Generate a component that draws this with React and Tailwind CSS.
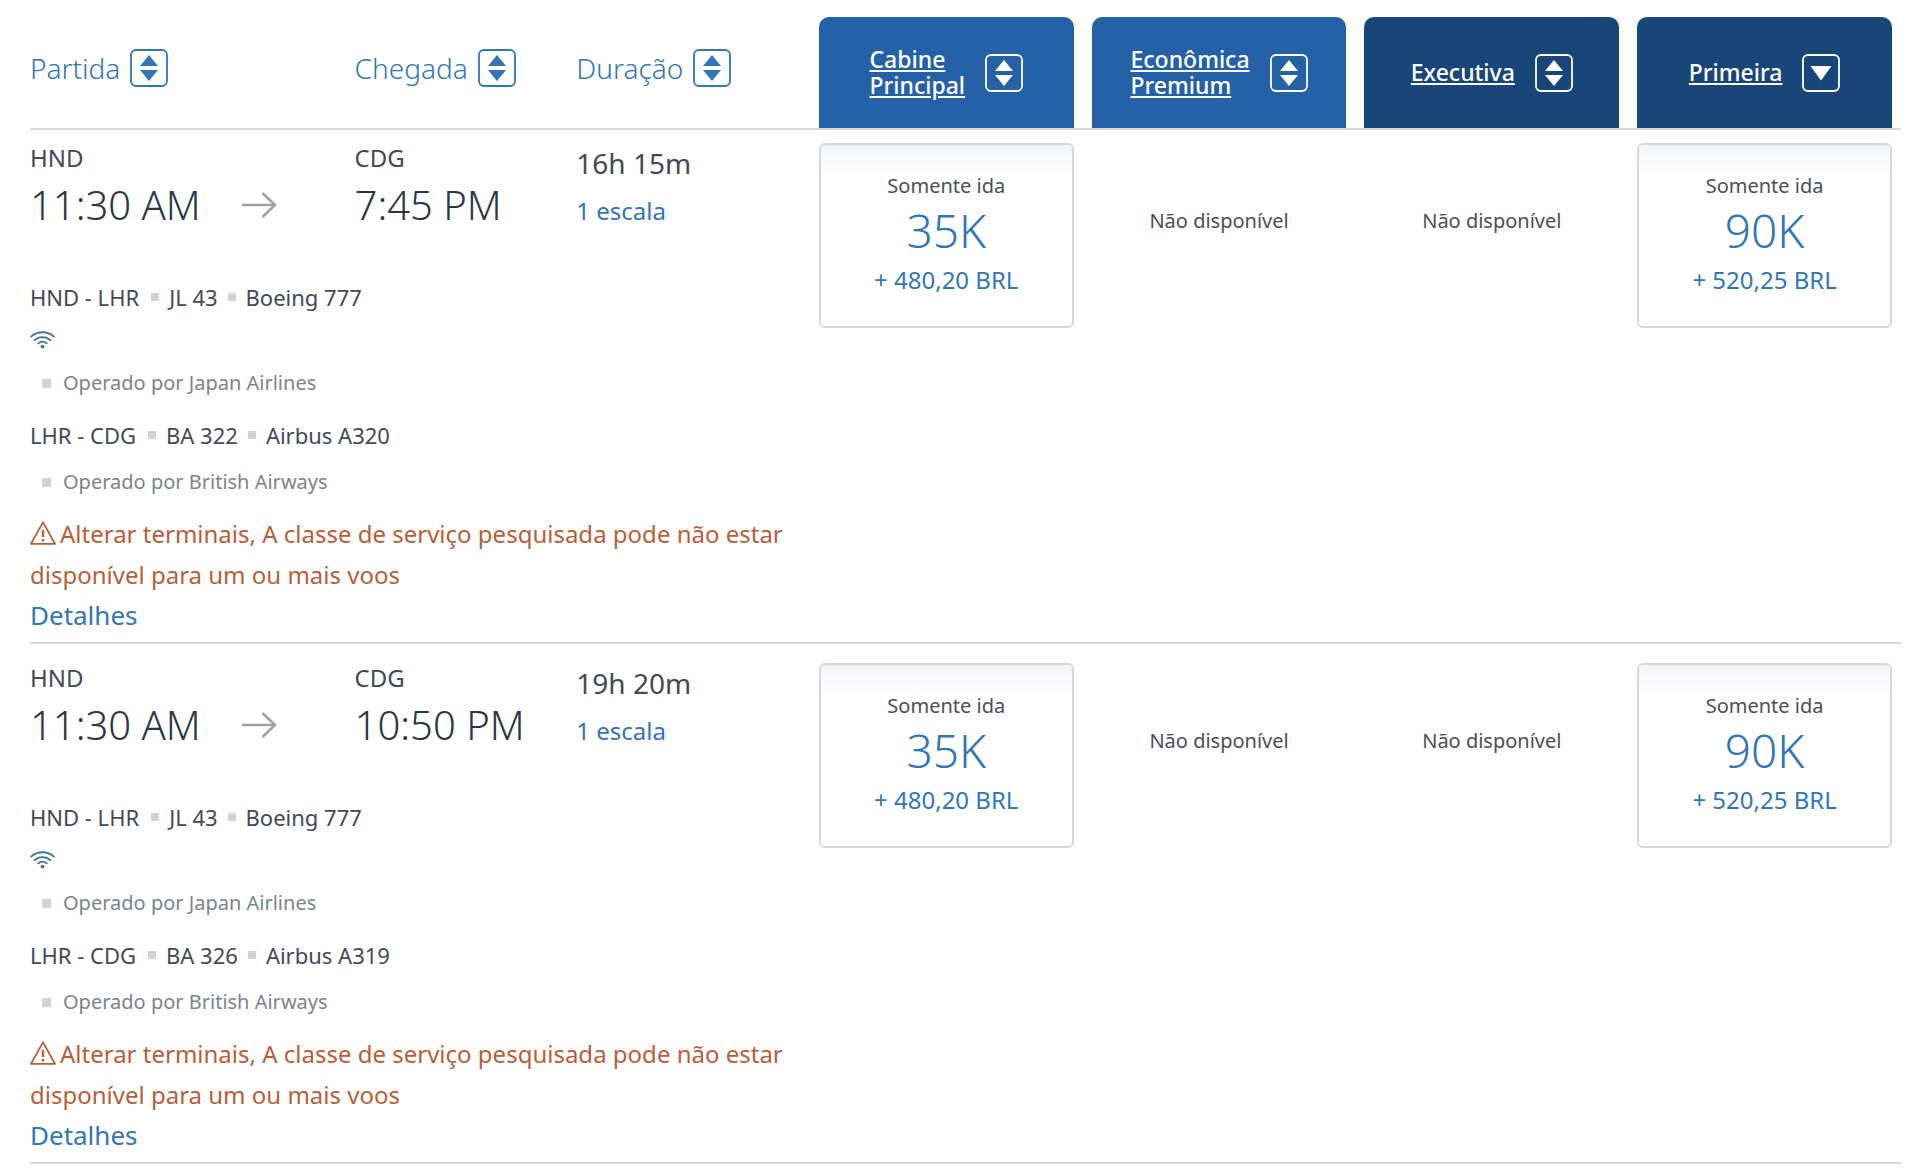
import { Fragment, useState } from "react";

const cabins = [
  { id: "main", lines: ["Cabine", "Principal"], color: "bg-[#2461a6]" },
  { id: "premium", lines: ["Econômica", "Premium"], color: "bg-[#2461a6]" },
  { id: "business", lines: ["Executiva"], color: "bg-[#194679]" },
  { id: "first", lines: ["Primeira"], color: "bg-[#194679]" },
];

const fares = {
  main: { miles: "35K", tax: "+ 480,20 BRL" },
  first: { miles: "90K", tax: "+ 520,25 BRL" },
};

const warning =
  "Alterar terminais, A classe de serviço pesquisada pode não estar disponível para um ou mais voos";

const flights = [
  {
    id: 1,
    departure: "11:30 AM",
    arrival: "7:45 PM",
    duration: "16h 15m",
    segments: [
      {
        route: "HND - LHR",
        number: "JL 43",
        aircraft: "Boeing 777",
        wifi: true,
        operator: "Operado por Japan Airlines",
      },
      {
        route: "LHR - CDG",
        number: "BA 322",
        aircraft: "Airbus A320",
        operator: "Operado por British Airways",
      },
    ],
  },
  {
    id: 2,
    departure: "11:30 AM",
    arrival: "10:50 PM",
    duration: "19h 20m",
    segments: [
      {
        route: "HND - LHR",
        number: "JL 43",
        aircraft: "Boeing 777",
        wifi: true,
        operator: "Operado por Japan Airlines",
      },
      {
        route: "LHR - CDG",
        number: "BA 326",
        aircraft: "Airbus A319",
        operator: "Operado por British Airways",
      },
    ],
  },
];

const SortIcon = ({ active }) => (
  <svg className="size-[38px] shrink-0" viewBox="0 0 38 38" aria-hidden="true">
    <rect
      x="1"
      y="1"
      width="36"
      height="36"
      rx="5"
      fill="none"
      stroke="currentColor"
      strokeWidth="1.8"
    />
    {active ? (
      <path d="M8.5 12h21L19 26.5z" fill="currentColor" />
    ) : (
      <path d="M19 6l9 11H10zM10 21h18l-9 11z" fill="currentColor" />
    )}
  </svg>
);

const ArrowIcon = () => (
  <svg
    className="h-[26px] w-[35px] shrink-0 text-[#a0a2a5]"
    viewBox="0 0 35 26"
    fill="none"
    stroke="currentColor"
    strokeWidth="2.6"
    aria-hidden="true"
  >
    <path d="M0 13h33M20.5 1L33 13 20.5 25" />
  </svg>
);

const WifiIcon = () => (
  <svg
    className="h-[18px] w-[25px] text-[#3f7596]"
    viewBox="0 0 25 18"
    fill="none"
    stroke="currentColor"
    strokeWidth="1.8"
    strokeLinecap="round"
    aria-hidden="true"
  >
    <path d="M1.2 5.6c6.2-5.8 16.4-5.8 22.6 0M4.6 9.2c4.4-4.2 11.4-4.2 15.8 0M8.2 12.4c2.6-2.2 6-2.2 8.6 0" />
    <circle cx="12.5" cy="15.6" r="1.9" fill="currentColor" stroke="none" />
  </svg>
);

const WarningIcon = () => (
  <svg
    className="mr-1 mb-2 inline-block h-6 w-[26px]"
    viewBox="0 0 26 24"
    fill="none"
    stroke="currentColor"
    strokeWidth="1.8"
    strokeLinejoin="round"
    aria-hidden="true"
  >
    <path d="M13 1.4L25 22.8H1z" />
    <path d="M13 9v7" strokeWidth="2.4" />
    <path d="M13 18v2.4" strokeWidth="2.4" />
  </svg>
);

const Segment = ({ segment }) => (
  <div>
    <div className="flex items-center text-[22px] leading-8">
      <span>{segment.route}</span>
      <span className="mr-2.5 ml-3 size-2 bg-[#d0d4da]" />
      <span>{segment.number}</span>
      <span className="mx-2.5 size-2 bg-[#d0d4da]" />
      <span>{segment.aircraft}</span>
    </div>
    {segment.wifi && (
      <div className="my-[18px]">
        <WifiIcon />
      </div>
    )}
    <div
      className={`flex items-center pl-3 text-xl leading-8 text-[#7a858e] ${
        segment.wifi ? "" : "mt-[15px]"
      }`}
    >
      <span className="mr-3 size-[9px] bg-[#d0d4da]" />
      {segment.operator}
    </div>
  </div>
);

const Fare = ({ fare }) => {
  if (!fare) {
    return (
      <p className="pt-[66px] text-center text-xl leading-6 text-[#4a4f58]">
        Não disponível
      </p>
    );
  }
  return (
    <button
      type="button"
      className="flex w-full flex-col items-center rounded-md border-2 border-[#d5d8dc] bg-linear-to-b from-[#f2f4f8] to-white to-[32px] pt-[29px] pb-[30px] text-[#3276b5]"
    >
      <span className="text-xl leading-6 text-[#4a4f58]">Somente ida</span>
      <span className="mt-2 text-[46px] leading-[48px] font-light">
        {fare.miles}
      </span>
      <span className="mt-2.5 text-2xl leading-8">{fare.tax}</span>
    </button>
  );
};

const SortHeader = ({ label, onClick, active }) => (
  <th className="pt-2 font-light">
    <button
      type="button"
      onClick={onClick}
      className="flex items-center gap-2.5 text-[28px] text-[#3276b5]"
    >
      {label}
      <SortIcon active={active} />
    </button>
  </th>
);

const App = () => {
  const [sortBy, setSortBy] = useState("first");

  return (
    <main className="min-h-screen bg-[#fefefe] pr-[19px] pl-[30px] font-['Noto_Sans',sans-serif] text-[#414b56]">
      <table className="w-full table-fixed border-collapse text-left">
        <colgroup>
          <col className="w-[17.35%]" />
          <col className="w-[11.85%]" />
          <col />
          <col className="w-[14.58%]" />
          <col className="w-[14.58%]" />
          <col className="w-[14.58%]" />
          <col className="w-[14.58%]" />
        </colgroup>
        <thead>
          <tr className="border-b-2 border-[#d5dade]">
            <SortHeader
              label="Partida"
              active={sortBy === "departure"}
              onClick={() => setSortBy("departure")}
            />
            <SortHeader
              label="Chegada"
              active={sortBy === "arrival"}
              onClick={() => setSortBy("arrival")}
            />
            <SortHeader
              label="Duração"
              active={sortBy === "duration"}
              onClick={() => setSortBy("duration")}
            />
            {cabins.map((cabin) => (
              <th key={cabin.id} className="px-[9px] pt-[17px] font-medium">
                <button
                  type="button"
                  onClick={() => setSortBy(cabin.id)}
                  className={`flex h-[111px] w-full items-center justify-center gap-5 rounded-t-[10px] text-left text-[23px] leading-[26px] text-white ${cabin.color}`}
                >
                  <span className="pb-0.5 underline">
                    {cabin.lines.map((line) => (
                      <span key={line} className="block">
                        {line}
                      </span>
                    ))}
                  </span>
                  <SortIcon active={sortBy === cabin.id} />
                </button>
              </th>
            ))}
          </tr>
        </thead>
        <tbody>
          {flights.map((flight, index) => {
            const top = index === 0 ? "pt-[13px]" : "pt-[19px]";
            return (
              <Fragment key={flight.id}>
                <tr className="align-top">
                  <td className={top}>
                    <div className="text-2xl leading-[30px]">HND</div>
                    <div className="mt-2 flex items-center justify-between pr-[78px] text-[40px] leading-12 font-light whitespace-nowrap text-[#2b3642]">
                      {flight.departure}
                      <ArrowIcon />
                    </div>
                  </td>
                  <td className={top}>
                    <div className="text-2xl leading-[30px]">CDG</div>
                    <div className="mt-2 text-[40px] leading-12 font-light whitespace-nowrap text-[#2b3642]">
                      {flight.arrival}
                    </div>
                  </td>
                  <td className={top}>
                    <div className="text-[28px] leading-10">
                      {flight.duration}
                    </div>
                    <a
                      href="#escala"
                      className="mt-3 block text-2xl leading-8 text-[#3276b5]"
                    >
                      1 escala
                    </a>
                  </td>
                  {cabins.map((cabin) => (
                    <td
                      key={cabin.id}
                      rowSpan={2}
                      className={`border-b-2 border-[#d5dade] px-[9px] ${top}`}
                    >
                      <Fare fare={fares[cabin.id]} />
                    </td>
                  ))}
                </tr>
                <tr className="border-b-2 border-[#d5dade] align-top">
                  <td colSpan={3} className="pt-[52px] pb-[7px]">
                    <div className="flex flex-col gap-5">
                      {flight.segments.map((segment) => (
                        <Segment key={segment.route} segment={segment} />
                      ))}
                    </div>
                    <p className="mt-[15px] text-2xl leading-[41px] text-[#b85f38]">
                      <WarningIcon />
                      {warning}
                    </p>
                    <a
                      href="#detalhes"
                      className="block text-[26px] leading-10 text-[#3276b5]"
                    >
                      Detalhes
                    </a>
                  </td>
                </tr>
              </Fragment>
            );
          })}
        </tbody>
      </table>
    </main>
  );
};
export default App;
